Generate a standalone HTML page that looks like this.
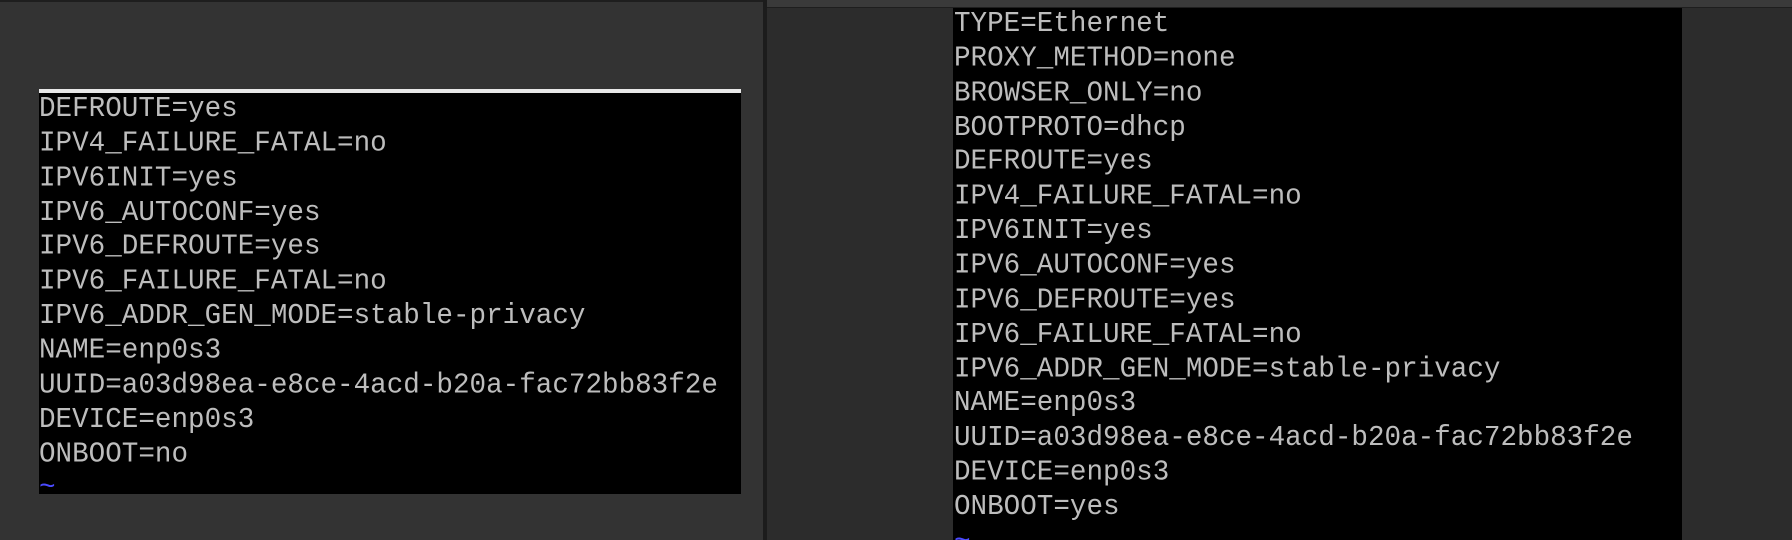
<!DOCTYPE html>
<html style="margin:0;width:1792px;height:540px;overflow:hidden"><head><style>
body{margin:0;width:1792px;height:540px;overflow:hidden;background:#333;position:relative;font-family:"Liberation Mono",monospace;}
.l{position:absolute;left:0;top:0;width:763px;height:540px;background:#333;border-top:2px solid #1e1e1e;box-sizing:border-box}
.sep{position:absolute;left:763px;top:0;width:4px;height:540px;background:#1c1c1c}
.r{position:absolute;left:767px;top:0;width:1025px;height:540px;background:#2c2c2c}
.rt{position:absolute;left:767px;top:0;width:1025px;height:7px;background:#3a3a3a;border-bottom:1px solid #1e1e1e}
.box{position:absolute;background:#000}
.t{position:absolute;color:#bdbdbd;font-size:27.6px;line-height:32.86px;white-space:pre;transform:scaleY(1.05);transform-origin:top left;overflow:hidden}
.tl{color:#4a4aff}
</style></head><body>
<div class="l"></div><div class="sep"></div><div class="r"></div><div class="rt"></div>
<div class="box" style="left:39px;top:89px;width:702px;height:405px;border-top:4px solid #e8e8e8;box-sizing:border-box"></div>
<div class="t" style="left:39px;top:93px">DEFROUTE=yes
IPV4_FAILURE_FATAL=no
IPV6INIT=yes
IPV6_AUTOCONF=yes
IPV6_DEFROUTE=yes
IPV6_FAILURE_FATAL=no
IPV6_ADDR_GEN_MODE=stable-privacy
NAME=enp0s3
UUID=a03d98ea-e8ce-4acd-b20a-fac72bb83f2e
DEVICE=enp0s3
ONBOOT=no
<span class="tl">~</span></div>
<div class="box" style="left:953px;top:8px;width:729px;height:532px"></div>
<div class="t" style="left:954px;top:8px;height:522px">TYPE=Ethernet
PROXY_METHOD=none
BROWSER_ONLY=no
BOOTPROTO=dhcp
DEFROUTE=yes
IPV4_FAILURE_FATAL=no
IPV6INIT=yes
IPV6_AUTOCONF=yes
IPV6_DEFROUTE=yes
IPV6_FAILURE_FATAL=no
IPV6_ADDR_GEN_MODE=stable-privacy
NAME=enp0s3
UUID=a03d98ea-e8ce-4acd-b20a-fac72bb83f2e
DEVICE=enp0s3
ONBOOT=yes
<span class="tl">~</span></div>
</body></html>
